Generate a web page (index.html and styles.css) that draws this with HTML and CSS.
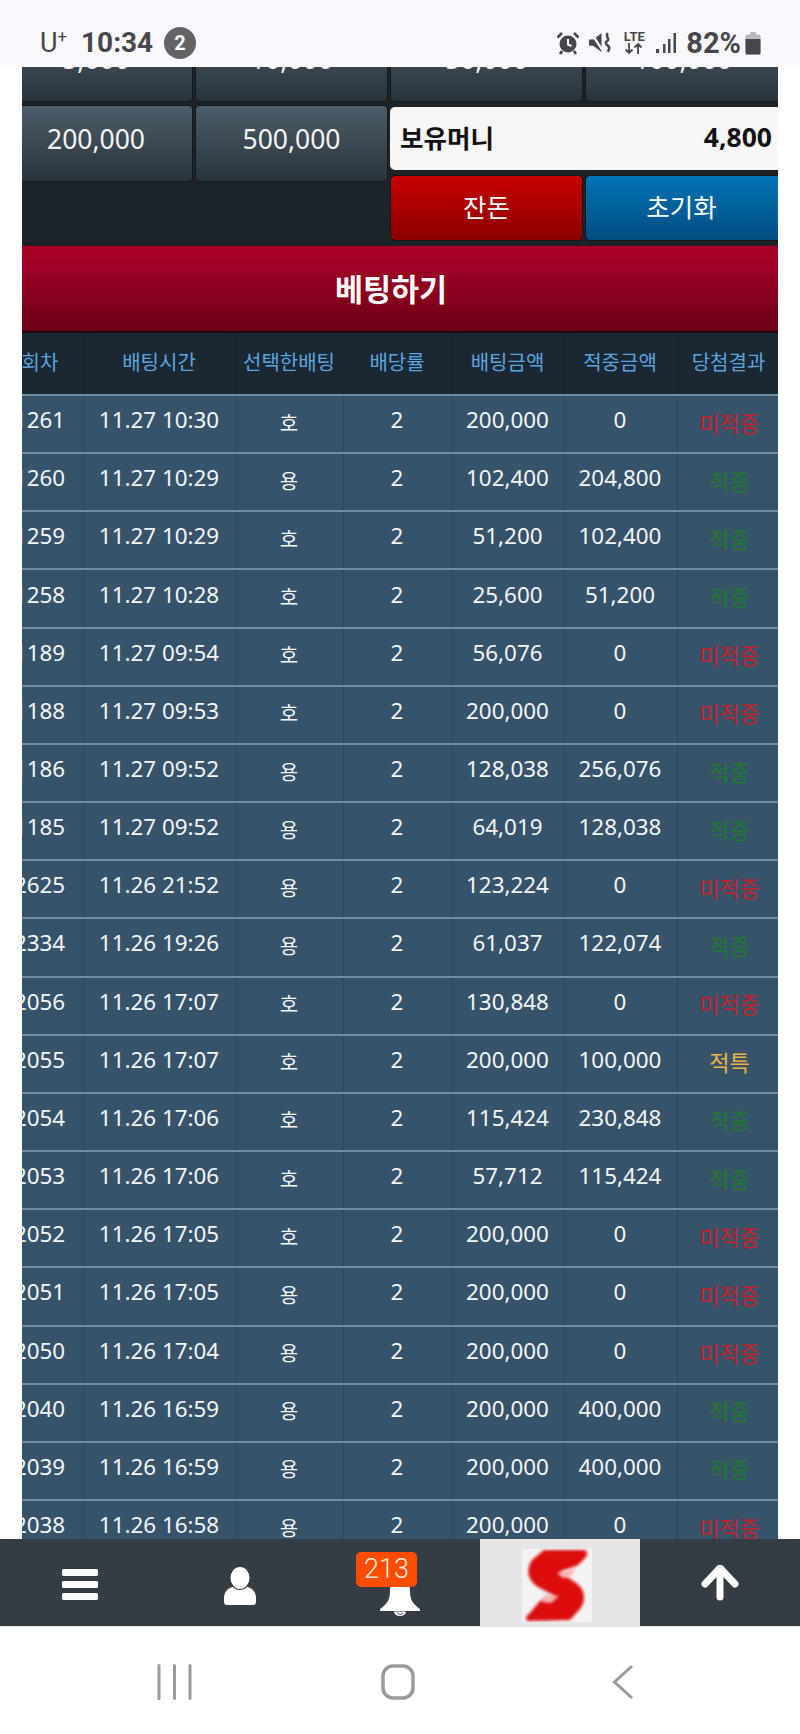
FILE: index.html
```html
<!DOCTYPE html>
<html lang="ko">
<head>
    <meta charset="UTF-8">
    <meta name="viewport" content="width=device-width, initial-scale=1.0">
    <title>베팅하기</title>
    <link rel="stylesheet" href="styles.css">
</head>
<body>
<div class="screen">
    <div class="status-bar">
        <div class="status-left">
            <span class="carrier">U<sup>+</sup></span>
            <span class="clock">10:34</span>
            <span class="notif-count">2</span>
        </div>
        <div class="status-right">
            <svg class="ic-alarm" width="24" height="24" viewBox="0 0 24 24">
                <circle cx="12" cy="13" r="8.5" fill="#47474b"/>
                <path d="M12 8v5.5l3.5 1.5" fill="none" stroke="#f8f8fd" stroke-width="2"/>
                <path d="M1.5 6.5 6 2M22.5 6.5 18 2M6 20l-2 3M18 20l2 3" stroke="#47474b" stroke-width="2.6" fill="none"/>
            </svg>
            <svg class="ic-mute" width="25" height="25" viewBox="0 0 24 24">
                <path d="M1 9h4l8-6v18l-8-6H1z" fill="#47474b"/>
                <path d="M3 3l12 18" stroke="#f8f8fd" stroke-width="2.2"/>
                <path d="M19 3c-3 3 2 5 0 7s-3 3 0 5 1 4 0 6" fill="none" stroke="#47474b" stroke-width="2.400"/>
            </svg>
            <div class="lte">
                <span>LTE</span>
                <svg width="20" height="11" viewBox="0 0 20 11">
                    <path d="M5 0v10M1.5 6.500 5 10l3.500-3.500M14 11V1M10.500 4.500 14 1l3.500 3.500" fill="none" stroke="#47474b" stroke-width="1.800"/>
                </svg>
            </div>
            <svg class="ic-signal" width="22" height="22" viewBox="0 0 22 22">
                <rect x="1" y="17" width="3" height="4" fill="#47474b"/>
                <rect x="8" y="12" width="2.500" height="9" fill="#47474b"/>
                <rect x="13" y="7" width="2.500" height="14" fill="#47474b"/>
                <rect x="18.500" y="1" width="2.500" height="20" fill="#47474b"/>
            </svg>
            <span class="battery-pct">82%</span>
            <svg class="ic-battery" width="16" height="24" viewBox="0 0 16 24">
                <path d="M5 1h6v2.500h3a1.500 1.500 0 0 1 1.500 1.500v17a1.500 1.500 0 0 1-1.500 1.500H2A1.500 1.500 0 0 1 .5 22V5A1.500 1.500 0 0 1 2 3.500h3z" fill="#b9b9bd"/>
                <path d="M.5 8h15v14a1.500 1.500 0 0 1-1.500 1.500H2A1.500 1.500 0 0 1 .5 22z" fill="#47474b"/>
            </svg>
        </div>
    </div>

    <div class="frame">
        <div class="inner">
            <div class="bet-panel">
                <button class="chip">5,000</button>
                <button class="chip">10,000</button>
                <button class="chip">50,000</button>
                <button class="chip">100,000</button>
                <button class="chip">200,000</button>
                <button class="chip">500,000</button>
                <div class="side">
                    <div class="money">
                        <span class="money-label">보유머니</span>
                        <span class="money-value">4,800</span>
                    </div>
                    <div class="side-btns">
                        <button class="btn-red">잔돈</button>
                        <button class="btn-blue">초기화</button>
                    </div>
                </div>
            </div>

            <div class="bet-submit">베팅하기</div>

            <div class="history">
                <div class="row head">
                    <div>회차</div><div>배팅시간</div><div>선택한배팅</div><div>배당률</div><div>배팅금액</div><div>적중금액</div><div>당첨결과</div>
                </div>
                <div class="row"><div>1261</div><div>11.27 10:30</div><div class="pick">호</div><div>2</div><div>200,000</div><div>0</div><div class="res lose">미적중</div></div>
                <div class="row"><div>1260</div><div>11.27 10:29</div><div class="pick">용</div><div>2</div><div>102,400</div><div>204,800</div><div class="res win">적중</div></div>
                <div class="row"><div>1259</div><div>11.27 10:29</div><div class="pick">호</div><div>2</div><div>51,200</div><div>102,400</div><div class="res win">적중</div></div>
                <div class="row"><div>1258</div><div>11.27 10:28</div><div class="pick">호</div><div>2</div><div>25,600</div><div>51,200</div><div class="res win">적중</div></div>
                <div class="row"><div>1189</div><div>11.27 09:54</div><div class="pick">호</div><div>2</div><div>56,076</div><div>0</div><div class="res lose">미적중</div></div>
                <div class="row"><div>1188</div><div>11.27 09:53</div><div class="pick">호</div><div>2</div><div>200,000</div><div>0</div><div class="res lose">미적중</div></div>
                <div class="row"><div>1186</div><div>11.27 09:52</div><div class="pick">용</div><div>2</div><div>128,038</div><div>256,076</div><div class="res win">적중</div></div>
                <div class="row"><div>1185</div><div>11.27 09:52</div><div class="pick">용</div><div>2</div><div>64,019</div><div>128,038</div><div class="res win">적중</div></div>
                <div class="row"><div>2625</div><div>11.26 21:52</div><div class="pick">용</div><div>2</div><div>123,224</div><div>0</div><div class="res lose">미적중</div></div>
                <div class="row"><div>2334</div><div>11.26 19:26</div><div class="pick">용</div><div>2</div><div>61,037</div><div>122,074</div><div class="res win">적중</div></div>
                <div class="row"><div>2056</div><div>11.26 17:07</div><div class="pick">호</div><div>2</div><div>130,848</div><div>0</div><div class="res lose">미적중</div></div>
                <div class="row"><div>2055</div><div>11.26 17:07</div><div class="pick">호</div><div>2</div><div>200,000</div><div>100,000</div><div class="res tie">적특</div></div>
                <div class="row"><div>2054</div><div>11.26 17:06</div><div class="pick">호</div><div>2</div><div>115,424</div><div>230,848</div><div class="res win">적중</div></div>
                <div class="row"><div>2053</div><div>11.26 17:06</div><div class="pick">호</div><div>2</div><div>57,712</div><div>115,424</div><div class="res win">적중</div></div>
                <div class="row"><div>2052</div><div>11.26 17:05</div><div class="pick">호</div><div>2</div><div>200,000</div><div>0</div><div class="res lose">미적중</div></div>
                <div class="row"><div>2051</div><div>11.26 17:05</div><div class="pick">용</div><div>2</div><div>200,000</div><div>0</div><div class="res lose">미적중</div></div>
                <div class="row"><div>2050</div><div>11.26 17:04</div><div class="pick">용</div><div>2</div><div>200,000</div><div>0</div><div class="res lose">미적중</div></div>
                <div class="row"><div>2040</div><div>11.26 16:59</div><div class="pick">용</div><div>2</div><div>200,000</div><div>400,000</div><div class="res win">적중</div></div>
                <div class="row"><div>2039</div><div>11.26 16:59</div><div class="pick">용</div><div>2</div><div>200,000</div><div>400,000</div><div class="res win">적중</div></div>
                <div class="row"><div>2038</div><div>11.26 16:58</div><div class="pick">용</div><div>2</div><div>200,000</div><div>0</div><div class="res lose">미적중</div></div>
            </div>
        </div>
    </div>

    <div class="bottom-nav">
        <div class="nav-item">
            <div class="burger"><i></i><i></i><i></i></div>
        </div>
        <div class="nav-item">
            <svg class="person" width="32" height="38" viewBox="0 0 32 38">
                <ellipse cx="16" cy="11" rx="9.500" ry="11" fill="#fff"/>
                <path d="M9 20c3 4 11 4 14 0 6 1 9 6 9 11v4c0 2-1 3-3 3H3c-2 0-3-1-3-3v-4c0-5 3-10 9-11z" fill="#fff"/>
            </svg>
        </div>
        <div class="nav-item bell-item">
            <svg class="bell" width="40" height="40" viewBox="0 0 40 40">
                <path d="M20 2c7 0 10 6 10 13 0 9 3 13 10 18v2H0v-2c7-5 10-9 10-18C10 8 13 2 20 2z" fill="#fff"/>
                <path d="M14 35.500a6 4.500 0 0 0 12 0z" fill="#fff"/>
                <path d="M17 36.500c1 2 4 2.500 6 .5" fill="none" stroke="#343c44" stroke-width="1"/>
            </svg>
            <span class="badge">213</span>
        </div>
        <div class="nav-item logo-cell">
            <div class="logo">
                <svg width="70" height="73" viewBox="0 0 70 73">
                    <defs><filter id="soft"><feGaussianBlur stdDeviation="1.600"/></filter></defs>
                    <path d="M22 1 L62 1 C66 2 66 6 63 9 L56 16 C50 19 44 20 38 23 L54 34 C64 41 64 52 58 60 L48 71 L6 72 C3 71 4 67 7 65 L18 52 C24 50 30 49 33 47 L16 38 C5 31 4 20 10 11z" fill="#dc0a10" filter="url(#soft)"/>
                    <path d="M35 24 L54 19 L49 27 L41 29z M22 46 L37 47 L29 54 L20 53z" fill="#f4b4b4" filter="url(#soft)"/>
                </svg>
            </div>
        </div>
        <div class="nav-item">
            <svg width="38" height="36" viewBox="0 0 38 36">
                <path d="M19 3 4 19M19 3l15 16M19 4v28" fill="none" stroke="#fff" stroke-width="7" stroke-linecap="round" stroke-linejoin="round"/>
            </svg>
        </div>
    </div>

    <div class="soft-keys">
        <svg class="key-recent" width="36" height="36" viewBox="0 0 36 36">
            <path d="M3 1.500v33M18.500 1.500v33M34 1.500v33" stroke="#9a9a9a" stroke-width="3" stroke-linecap="round"/>
        </svg>
        <svg class="key-home" width="34" height="36" viewBox="0 0 34 36">
            <rect x="2" y="2" width="30" height="32" rx="10" fill="none" stroke="#9a9a9a" stroke-width="3.500"/>
        </svg>
        <svg class="key-back" width="22" height="36" viewBox="0 0 22 36">
            <path d="M20 2 2.500 18 20 34" fill="none" stroke="#9a9a9a" stroke-width="3"/>
        </svg>
    </div>
</div>
</body>
</html>
```

FILE: styles.css
```css
* {
    box-sizing: border-box;
}

body {
    margin: 0;
    background: #fff;
    font-family: "Noto Sans", "Noto Sans CJK KR", sans-serif;
}

.screen {
    width: 800px;
    height: 1734px;
    display: flex;
    flex-direction: column;
    overflow: hidden;
}

/* status bar */
.status-bar {
    height: 67px;
    flex: none;
    background: #f8f8fd;
    padding: 18px 39px 0 40px;
    display: flex;
    justify-content: space-between;
    align-items: center;
    color: #47474b;
    font-family: Roboto, sans-serif;
}

.status-left,
.status-right {
    display: flex;
    align-items: center;
}

.carrier {
    font-size: 27px;
    width: 41px;
}

.carrier sup {
    font-size: 17px;
    line-height: 0;
}

.clock {
    font-size: 28px;
    font-weight: 700;
    width: 83px;
}

.notif-count {
    width: 32px;
    height: 32px;
    border-radius: 50%;
    background: #636367;
    color: #f8f8fd;
    font-size: 20px;
    font-weight: 700;
    display: flex;
    align-items: center;
    justify-content: center;
}

.ic-alarm {
    margin-right: 8px;
}

.ic-mute {
    margin-right: 9px;
}

.lte {
    width: 24px;
    display: flex;
    flex-direction: column;
    align-items: center;
    font-size: 13px;
    font-weight: 700;
    line-height: 12px;
    margin-right: 9px;
}

.lte svg {
    display: block;
}

.ic-signal {
    margin-right: 9px;
}

.battery-pct {
    font-size: 29px;
    font-weight: 700;
    margin-right: 4px;
}

/* page content */
.frame {
    flex: 1;
    min-height: 0;
    margin: 0 22px;
    overflow: hidden;
}

.inner {
    width: 782px;
    margin: -42px 0 0 -23px;
}

.bet-panel {
    display: grid;
    grid-template-columns: 194px 193px 193px 196px;
    grid-template-rows: 77px auto;
    gap: 3px 2px;
    padding-bottom: 5px;
    background: #1d2429;
}

.chip {
    height: 77px;
    padding: 0 0 10px;
    border: 1px solid #14181b;
    border-radius: 4px;
    background: linear-gradient(#4b5d6a, #2a3339);
    color: #f2f4f5;
    font: inherit;
    font-size: 26.500px;
}

.side {
    grid-column: 3 / 5;
    padding-top: 2px;
    display: flex;
    flex-direction: column;
    gap: 5px;
}

.money {
    height: 63px;
    padding: 0 9px 4px 10px;
    border-radius: 5px 0 0 5px;
    background: #f6f6f6;
    color: #111;
    font-weight: 700;
    display: flex;
    justify-content: space-between;
    align-items: center;
}

.money-label {
    font-size: 25.500px;
}

.money-value {
    font-size: 26.500px;
}

.side-btns {
    display: grid;
    grid-template-columns: 193px 196px;
    gap: 2px;
}

.btn-red,
.btn-blue {
    height: 66px;
    padding: 0 0 6px;
    border: 1px solid #14181b;
    border-radius: 5px;
    color: #fff;
    font: inherit;
    font-size: 25.500px;
}

.btn-blue {
    padding-right: 3px;
}

.btn-red {
    background: linear-gradient(#c80000, #8c0000);
}

.btn-blue {
    background: linear-gradient(#0074b4, #004d80);
}

.bet-submit {
    height: 87px;
    display: flex;
    align-items: center;
    justify-content: center;
    padding: 0 0 2px 2px;
    border-bottom: 2px solid #1a0a0c;
    background: linear-gradient(#ad0029, #6c0015);
    color: #fff;
    font-size: 30.500px;
    font-weight: 700;
}

.history {
    background: #37536a;
}

.row {
    display: grid;
    grid-template-columns: 84px 153px 107px 109px 112px 113px 104px;
    height: 58.160px;
    border-top: 2px solid #6d8ea5;
    color: #f3f6f8;
    font-size: 22.400px;
}

.row > div {
    display: flex;
    align-items: center;
    justify-content: center;
    padding: 0 2px 9px 0;
    white-space: nowrap;
    border-left: 1px solid #2e4659;
}

.row > div:first-child {
    border-left: 0;
    padding-right: 3px;
}

.row.head {
    height: 61px;
    border-top: 0;
    background: #1c2831;
    color: #5aa5e0;
    font-size: 20px;
}

.row.head > div {
    border-left-color: #17222a;
    padding-bottom: 4px;
}

.row.head > div:first-child {
    padding-right: 2px;
}

.row > .pick {
    font-size: 20px;
    padding-bottom: 4px;
}

.row > .res {
    font-size: 22px;
    padding: 0 0 5px;
}

.lose {
    color: #c8202a;
}

.win {
    color: #1d7a2e;
}

.tie {
    color: #eeb244;
}

/* bottom nav */
.bottom-nav {
    height: 88px;
    flex: none;
    display: grid;
    grid-template-columns: repeat(5, 160px);
    background: #343c44;
    border-bottom: 1px solid #e4e4e4;
}

.nav-item {
    display: flex;
    align-items: center;
    justify-content: center;
}

.burger {
    width: 36px;
    display: flex;
    flex-direction: column;
    gap: 5px;
    padding-top: 3px;
}

.burger i {
    height: 7px;
    border-radius: 1.500px;
    background: #fff;
}

.person {
    margin-top: 6px;
}

.bell-item {
    position: relative;
}

.bell {
    margin-top: 27px;
}

.badge {
    position: absolute;
    left: 36px;
    top: 13px;
    width: 61px;
    height: 35px;
    border-radius: 5px;
    background: #ff4d00;
    color: #ffe9dc;
    font-family: Roboto, sans-serif;
    font-size: 27px;
    font-weight: 300;
    line-height: 35px;
    text-align: center;
}

.logo-cell {
    background: #e6e6e6;
    padding: 6px 6px 0 0;
}

.logo {
    width: 70px;
    height: 73px;
    background: #f3f3f3;
}

.logo svg {
    display: block;
}

/* android keys */
.soft-keys {
    height: 107px;
    flex: none;
    background: #fff;
    display: flex;
    align-items: flex-start;
    padding-top: 37px;
}

.key-recent {
    margin-left: 156px;
}

.key-home {
    margin-left: 189px;
}

.key-back {
    margin-left: 197px;
}
```
